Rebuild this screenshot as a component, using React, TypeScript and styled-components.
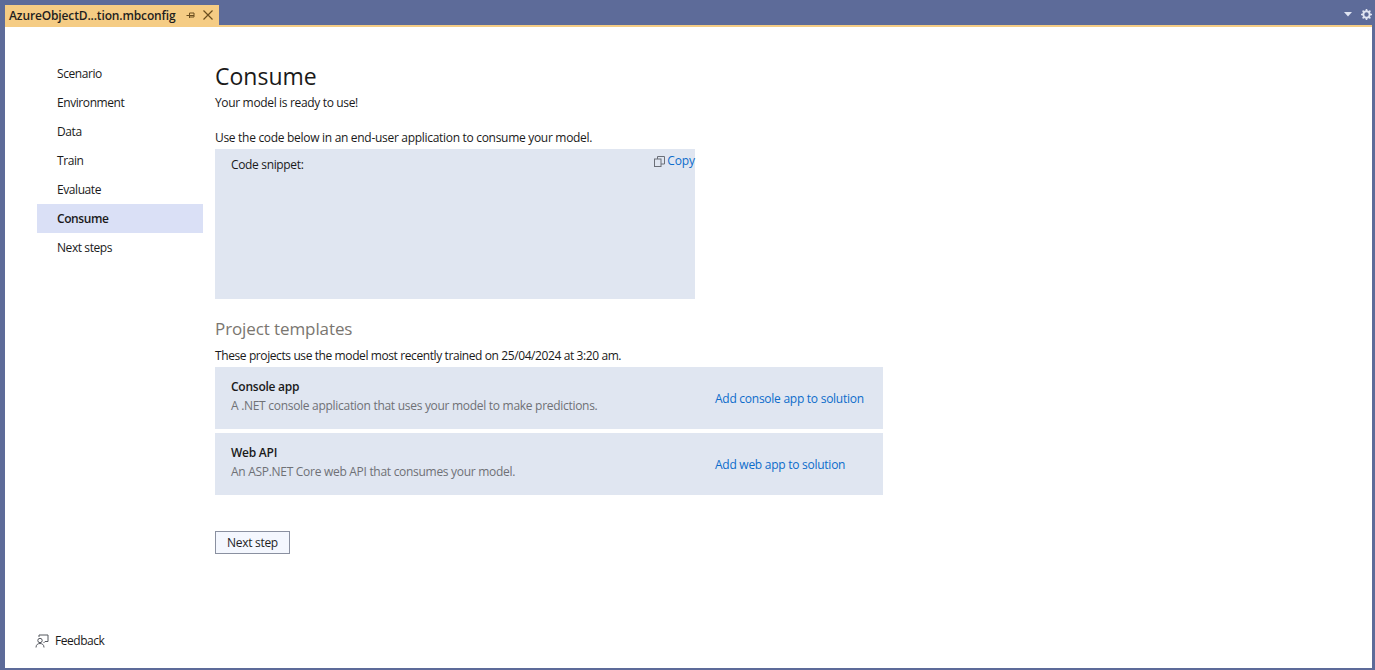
import React from 'react';
import styled, { createGlobalStyle } from 'styled-components';

const Global = createGlobalStyle`
  html, body { margin: 0; padding: 0; height: 100%; overflow: hidden; }
  #root { height: 100%; }
  body { font-family: "Open Sans", "Noto Sans", sans-serif; font-size: 12px; color: #1a1a1a; }
`;

const Frame = styled.div`
  width: 1375px; height: 670px; box-sizing: border-box; background: #5d6b99;
  padding: 5px 3px 2px 5px; display: flex; flex-direction: column;
`;
const TabBar = styled.div`
  height: 20px; flex: none; display: flex; align-items: stretch; justify-content: space-between;
`;
const Tab = styled.div`
  width: 214px; background: #f5cc84; display: flex; align-items: center; padding-left: 4px; box-sizing: border-box;
`;
const TabTitle = styled.span`
  font-weight: 600; font-size: 12px; letter-spacing: -0.14px; color: #1e1e1e; width: 173px; white-space: nowrap;
`;
const TabIconSvg = styled.svg<{ $gap: number }>`
  width: 10px; height: 10px; flex: none; margin-right: ${p => p.$gap}px; margin-left: 4px;
`;
const BarIcons = styled.div`
  display: flex; align-items: center; gap: 9px; margin-top: -1px;
`;
const GoldLine = styled.div`
  height: 2px; flex: none; background: #f5cc84;
`;
const Content = styled.div`
  flex: 1; background: #fff; display: flex; min-height: 0;
`;
const Sidebar = styled.nav`
  width: 166px; margin-left: 32px; padding-top: 32px; flex: none; display: flex; flex-direction: column; position: relative;
`;
const NavItem = styled.div<{ $active?: boolean }>`
  height: 29px; line-height: 29px; padding-left: 20px; font-size: 12px; letter-spacing: -0.42px;
  font-weight: ${p => (p.$active ? 600 : 400)};
  background: ${p => (p.$active ? '#dae0f6' : 'transparent')};
`;
const Feedback = styled.div`
  position: absolute; left: -2px; bottom: 19px; display: flex; align-items: center; gap: 6px; font-size: 12px; letter-spacing: -0.45px;
`;
const Main = styled.main`
  margin-left: 12px; width: 668px; display: flex; flex-direction: column; padding-top: 34px;
`;
const Title = styled.h1`
  margin: 0; font-size: 23px; font-weight: 400; line-height: 30px; height: 30px; letter-spacing: 0;
`;
const Text = styled.p`
  margin: 0; font-size: 12px; line-height: 18px; letter-spacing: -0.34px; white-space: nowrap;
`;
const SubLine = styled(Text)`
  margin-top: 3px;
`;
const UseLine = styled(Text)`
  margin-top: 17px; height: 20px; letter-spacing: -0.3px;
`;
const Snippet = styled.div`
  width: 480px; height: 150px; background: #e0e6f1; display: flex; justify-content: space-between; align-items: flex-start;
  padding: 7px 0 0 16px; box-sizing: border-box;
`;
const CopyLink = styled.div`
  display: flex; align-items: center; gap: 2px; color: #0c6ccb; font-size: 12px; letter-spacing: -0.1px; line-height: 10px; height: 10px;
`;
const Section = styled.h2`
  margin: 18px 0 0; font-size: 17px; font-weight: 400; color: #7a7670; line-height: 23px; letter-spacing: -0.1px;
`;
const TemplatesIntro = styled(Text)`
  margin-top: 7px; height: 18px; letter-spacing: -0.4px;
`;
const Card = styled.div`
  width: 668px; height: 62px; background: #e0e6f1; margin-top: 4px; padding: 0 19px 0 16px; box-sizing: border-box;
  display: flex; align-items: center; justify-content: space-between;
`;
const FirstCard = styled(Card)`
  margin-top: 2px;
`;
const CardBody = styled.div`
  padding-bottom: 4px;
`;
const CardName = styled.div`
  font-weight: 600; font-size: 12px; line-height: 18px; letter-spacing: -0.25px;
`;
const CardDesc = styled.div`
  color: #6f7176; font-size: 12px; line-height: 18px; letter-spacing: -0.29px; margin-top: 1px;
`;
const CardLink = styled.div`
  color: #0c6ccb; font-size: 12px; letter-spacing: -0.26px; width: 149px; white-space: nowrap;
`;
const NextButton = styled.button`
  margin-top: 36px; width: 75px; height: 23px; align-self: flex-start; padding: 0; background: #f4f7fe; border: 1px solid #8a90a0;
  font: 12px "Open Sans", sans-serif; letter-spacing: -0.3px; color: #1e1e1e;
`;

const Pin = () => (
  <TabIconSvg $gap={3} viewBox="0 0 10 10">
    <path d="M0.5 5.5H3M3.5 3V8M3.5 3H8V7H3.5M4 5.5H8" fill="none" stroke="#6b4e1e" strokeWidth="1" />
  </TabIconSvg>
);
const Close = () => (
  <TabIconSvg $gap={0} viewBox="0 0 10 10">
    <path d="M0.5 0.5L9.5 9.5M9.5 0.5L0.5 9.5" stroke="#6b4e1e" strokeWidth="1.2" fill="none" />
  </TabIconSvg>
);
const Chevron = () => (
  <svg width="8" height="5" viewBox="0 0 8 5"><path d="M0 0H8L4 4.5Z" fill="#dfe4f2" /></svg>
);
const Gear = () => (
  <svg width="11" height="11" viewBox="0 0 11 11">
    <circle cx="5.5" cy="5.5" r="3.2" fill="none" stroke="#dfe4f2" strokeWidth="2" />
    <path d="M5.5 0V2M5.5 9V11M0 5.5H2M9 5.5H11M1.6 1.6L3 3M8 8L9.4 9.4M9.4 1.6L8 3M3 8L1.6 9.4" stroke="#dfe4f2" strokeWidth="1.6" />
  </svg>
);
const CopyIcon = () => (
  <svg width="11" height="11" viewBox="0 0 11 11" fill="none" stroke="#6b6f78" strokeWidth="1">
    <rect x="0.5" y="3" width="6.5" height="7.5" fill="#e0e6f1" />
    <path d="M3.5 3V0.5H10.5V8H7" />
  </svg>
);
const FeedbackIcon = () => (
  <svg width="14" height="14" viewBox="0 0 14 14" fill="none" stroke="#55585f" strokeWidth="1">
    <path d="M4 3V1H13V7.5H10L8.5 9" />
    <circle cx="5" cy="6.5" r="2.2" />
    <path d="M1 13.5C1 10.5 3 9.5 5 9.5C7 9.5 9 10.5 9 13.5" />
  </svg>
);

const nav = ['Scenario', 'Environment', 'Data', 'Train', 'Evaluate', 'Consume', 'Next steps'];

export default function App() {
  return (
    <>
      <Global />
      <Frame>
        <TabBar>
          <Tab>
            <TabTitle>AzureObjectD...tion.mbconfig</TabTitle>
            <Pin />
            <Close />
          </Tab>
          <BarIcons>
            <Chevron />
            <Gear />
          </BarIcons>
        </TabBar>
        <GoldLine />
        <Content>
          <Sidebar>
            {nav.map(n => (
              <NavItem key={n} $active={n === 'Consume'}>{n}</NavItem>
            ))}
            <Feedback><FeedbackIcon />Feedback</Feedback>
          </Sidebar>
          <Main>
            <Title>Consume</Title>
            <SubLine>Your model is ready to use!</SubLine>
            <UseLine>Use the code below in an end-user application to consume your model.</UseLine>
            <Snippet>
              <Text>Code snippet:</Text>
              <CopyLink><CopyIcon />Copy</CopyLink>
            </Snippet>
            <Section>Project templates</Section>
            <TemplatesIntro>These projects use the model most recently trained on 25/04/2024 at 3:20 am.</TemplatesIntro>
            <FirstCard>
              <CardBody>
                <CardName>Console app</CardName>
                <CardDesc>A .NET console application that uses your model to make predictions.</CardDesc>
              </CardBody>
              <CardLink>Add console app to solution</CardLink>
            </FirstCard>
            <Card>
              <CardBody>
                <CardName>Web API</CardName>
                <CardDesc>An ASP.NET Core web API that consumes your model.</CardDesc>
              </CardBody>
              <CardLink>Add web app to solution</CardLink>
            </Card>
            <NextButton>Next step</NextButton>
          </Main>
        </Content>
      </Frame>
    </>
  );
}
